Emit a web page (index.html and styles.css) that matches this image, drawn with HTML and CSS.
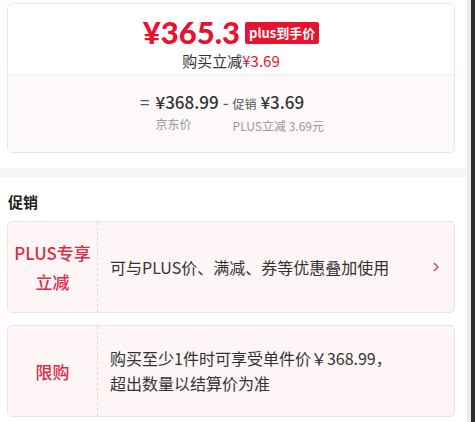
FILE: index.html
```html
<!DOCTYPE html>
<html lang="zh-CN">
<head>
<meta charset="utf-8">
<link rel="stylesheet" href="styles.css">
</head>
<body>
<div class="page">
  <div class="main">
    <section class="price-card">
      <div class="price-top">
        <div class="price-row">
          <span class="price">¥365.3</span>
          <span class="badge">plus到手价</span>
        </div>
        <div class="save">购买立减<span class="red">¥3.69</span></div>
      </div>
      <div class="price-bottom">
        <div class="calc">
          <span class="op">=</span>
          <div class="term">
            <div class="val">¥368.99</div>
            <div class="lbl">京东价</div>
          </div>
          <span class="op minus">-</span>
          <div class="term">
            <div class="val"><span class="small">促销</span> ¥3.69</div>
            <div class="lbl">PLUS立减 3.69元</div>
          </div>
        </div>
      </div>
    </section>
    <div class="sep"></div>
    <h3 class="title">促销</h3>
    <div class="promo">
      <div class="promo-tag">PLUS专享<br>立减</div>
      <div class="promo-text">可与PLUS价、满减、券等优惠叠加使用</div>
      <svg class="chev" width="8" height="12" viewBox="0 0 8 12"><path d="M2 2 L6 6 L2 10" fill="none" stroke="#d23a55" stroke-width="1.4"/></svg>
    </div>
    <div class="promo">
      <div class="promo-tag">限购</div>
      <div class="promo-text">购买至少1件时可享受单件价￥368.99，<br>超出数量以结算价为准</div>
    </div>
  </div>
  <div class="scrollbar"><div class="track"></div><div class="thumb"></div></div>
</div>
</body>
</html>
```

FILE: styles.css
```css
* { box-sizing: border-box; }
html, body { margin: 0; padding: 0; background: #fff; }
body {
  font-family: "Noto Sans CJK SC", "Noto Sans", sans-serif;
  color: #333;
}
.page { display: flex; width: 475px; height: 422px; overflow: hidden; }
.main { width: 467px; padding: 3px 12px 0 7px; }
.scrollbar { display: flex; }
.track { width: 4px; background: #ececec; }
.thumb { width: 4px; background: #2e2e2e; }

.price-card {
  border: 1px solid #f0e4e7;
  border-radius: 5px;
  overflow: hidden;
}
.price-top {
  height: 71px;
  display: flex;
  flex-direction: column;
  align-items: center;
  padding-top: 13px;
  border-bottom: 1px solid #f7ecee;
  background: #fff;
}
.price-row { display: flex; align-items: center; gap: 5px; height: 30px; }
.price {
  font-family: Lato, "Noto Sans", sans-serif;
  font-size: 31px;
  font-weight: 900;
  color: #e8132e;
  line-height: 30px;
  height: 30px;
}
.badge {
  background: #e8132e;
  color: #fff;
  font-size: 13px;
  font-weight: 700;
  height: 22px;
  line-height: 22px;
  padding: 0 4px;
  border-radius: 2px;
  margin-top: 2px;
}
.save { font-size: 15px; line-height: 20px; margin-top: 4px; color: #333; }
.red { color: #e8132e; }

.price-bottom {
  background: #fdf8f9;
  height: 77px;
  display: flex;
  justify-content: center;
  padding-top: 15px;
}
.calc { display: flex; align-items: flex-start; gap: 4px; margin-left: 2px; }
.op { font-size: 17px; line-height: 24px; color: #555; margin-right: 2px; }
.minus { margin: 0; }
.val { font-size: 17px; font-weight: 500; line-height: 24px; color: #333; }
.small { font-size: 12px; font-weight: 400; color: #555; }
.lbl { font-size: 12px; color: #999; line-height: 16px; margin-top: 2px; }

.sep { height: 9px; background: #f6f6f8; margin: 15px -12px 0 -7px; }
.title { font-size: 15px; font-weight: 700; margin: 14px 0 0 1px; line-height: 22px; color: #222; }

.promo {
  display: flex;
  align-items: center;
  height: 92px;
  margin-top: 8px;
  background: #fdf5f6;
  border: 1px solid #f5dfe3;
  border-radius: 5px;
}
.promo + .promo { margin-top: 12px; }
.promo-tag {
  width: 90px;
  height: 100%;
  display: flex;
  align-items: center;
  justify-content: center;
  text-align: center;
  font-size: 17px;
  font-weight: 500;
  line-height: 29px;
  color: #de2a45;
  border-right: 1px dashed #ecd3d8;
}
.promo-text {
  flex: 1;
  padding-left: 12px;
  font-size: 16px;
  line-height: 25px;
  color: #333;
}
.chev { margin-right: 14px; }
```
